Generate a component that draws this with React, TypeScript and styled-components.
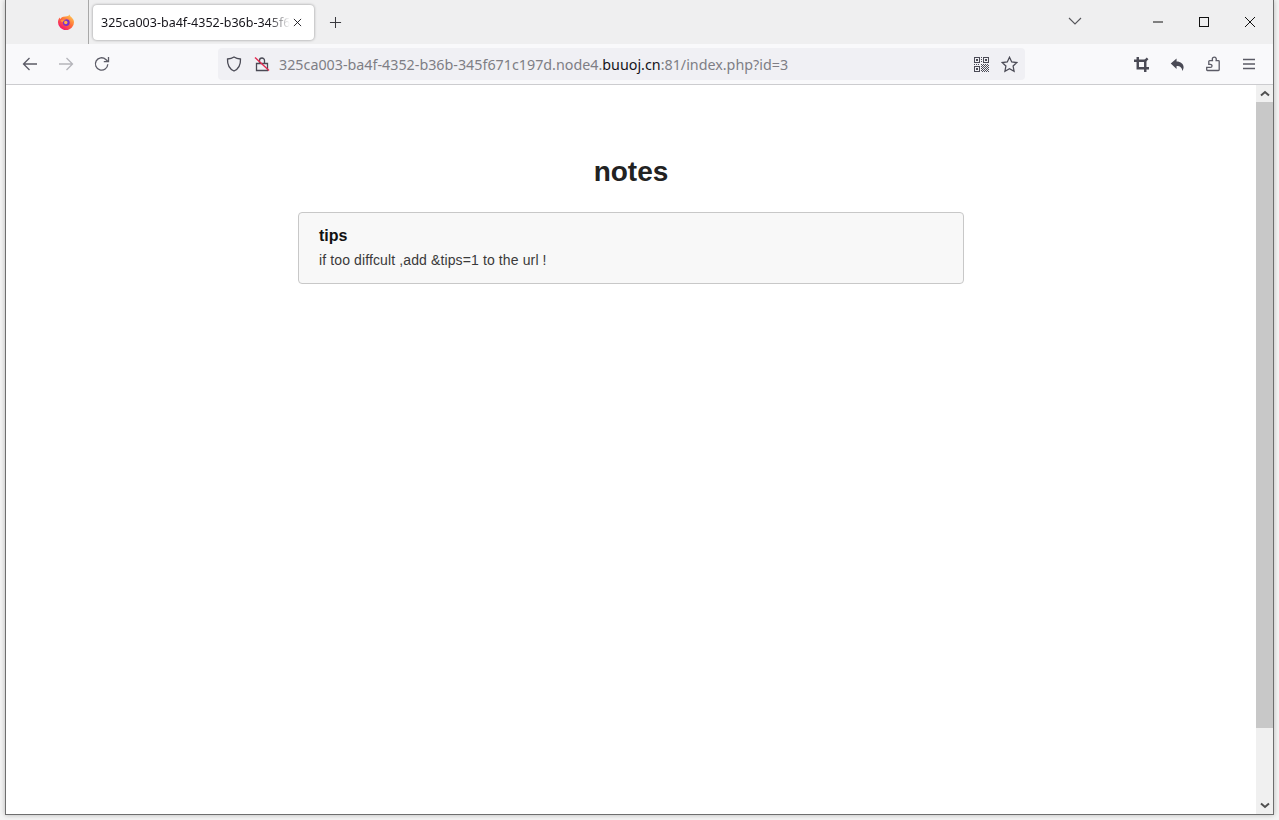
import React from "react";
import styled, { createGlobalStyle } from "styled-components";

const GlobalStyle = createGlobalStyle`
  html, body {
    margin: 0;
    padding: 0;
    height: 100%;
    overflow: hidden;
    background: #f4f4f4;
  }
`;

const UI_FONT = `"Noto Sans", "Open Sans", sans-serif`;

export default function App() {
  return (
    <>
      <GlobalStyle />
      <Desktop>
        <BrowserWindow>
          <TabStrip>
            <AppSlot>
              <FirefoxLogo />
            </AppSlot>
            <Tab>
              <TabTitle>325ca003-ba4f-4352-b36b-345f671c197d.node4.buuoj.cn:81/index.php?id=3</TabTitle>
              <TabClose viewBox="0 0 10 10">
                <path d="M1 1l8 8M9 1L1 9" />
              </TabClose>
            </Tab>
            <NewTab viewBox="0 0 14 14">
              <path d="M7 1v12M1 7h12" />
            </NewTab>
            <TabStripRight>
              <TabList viewBox="0 0 14 8">
                <path d="M1 1l6 6 6-6" />
              </TabList>
              <CaptionButtons>
                <CaptionButton>
                  <svg viewBox="0 0 10 10" width="10" height="10">
                    <path d="M0 5h10" />
                  </svg>
                </CaptionButton>
                <CaptionButton>
                  <svg viewBox="0 0 10 10" width="10" height="10">
                    <rect x="0.5" y="0.5" width="9" height="9" />
                  </svg>
                </CaptionButton>
                <CaptionButton>
                  <svg viewBox="0 0 10 10" width="10" height="10">
                    <path d="M0 0l10 10M10 0L0 10" />
                  </svg>
                </CaptionButton>
              </CaptionButtons>
            </TabStripRight>
          </TabStrip>

          <NavBar>
            <NavGroup>
              <NavButton>
                <NavIcon viewBox="0 0 16 16">
                  <path d="M15 8H1.5M7.5 2L1.5 8l6 6" />
                </NavIcon>
              </NavButton>
              <NavButton>
                <NavIcon $muted viewBox="0 0 16 16">
                  <path d="M1 8h13.5M8.500 2l6 6-6 6" />
                </NavIcon>
              </NavButton>
              <NavButton>
                <NavIcon viewBox="0 0 16 16">
                  <path d="M13.800 8.300a6.200 6.200 0 1 1-2-4.900L14 5.500" />
                  <path d="M14.500 1v4.700H9.800" />
                </NavIcon>
              </NavButton>
            </NavGroup>

            <UrlBar>
              <ShieldIcon viewBox="0 0 16 16">
                <path d="M8 1c2 1.300 4 1.800 6.500 2 .2 5.500-1.500 9.800-6.500 12C3 12.800 1.300 8.500 1.500 3 4 2.800 6 2.300 8 1z" />
              </ShieldIcon>
              <LockIcon viewBox="0 0 16 16">
                <path className="body" d="M5.500 7V4.500a2.500 2.500 0 0 1 5 0V7M2.500 7.500h11v7h-11z" />
                <path className="slash" d="M1 1.500l14 13" />
              </LockIcon>
              <UrlText>
                325ca003-ba4f-4352-b36b-345f671c197d.node4.<UrlHost>buuoj.cn</UrlHost>:81/index.php?id=3
              </UrlText>
              <QrCode />
              <StarIcon viewBox="0 0 16 16">
                <path d="M8 1.200l2.100 4.400 4.800.6-3.500 3.300.9 4.800L8 12l-4.300 2.300.9-4.800L1.100 6.200l4.800-.6z" />
              </StarIcon>
            </UrlBar>

            <NavGroup>
              <NavButton>
                <CropIcon viewBox="0 0 16 16">
                  <path d="M4 0v12h12M0 4h12v12" />
                  <path d="M12 4l2.500-2.500" />
                </CropIcon>
              </NavButton>
              <NavButton>
                <SolidIcon viewBox="0 0 16 16">
                  <path d="M7 1.500v3.300c4.500 0 7.500 2.600 7.500 6.200 0 1.600-.7 3-1.500 4 .2-3.300-1.800-5.500-6-5.500v3.300L.8 7z" />
                </SolidIcon>
              </NavButton>
              <NavButton>
                <NavIcon viewBox="0 0 16 16">
                  <path d="M9.500 1.200c-1.300 0-2.200 1-2.200 2.100 0 .5.200.9.200 1.400H4.600c-.5 0-.8.300-.8.800v2.900h1.500c1 0 1.700.7 1.700 1.500s-.7 1.500-1.700 1.500H1.700v2.400c0 .4.300.7.700.7h11c.5 0 .8-.3.800-.7V5.500c0-.5-.3-.8-.8-.8h-2.300c0-.5.200-.9.200-1.400 0-1.100-.6-2.100-1.800-2.100z" />
                </NavIcon>
              </NavButton>
              <NavButton>
                <NavIcon viewBox="0 0 16 16">
                  <path d="M2 3.500h12M2 8h12M2 12.500h12" />
                </NavIcon>
              </NavButton>
            </NavGroup>
          </NavBar>

          <Viewport>
            <Page>
              <Title>notes</Title>
              <Panel>
                <PanelTitle>tips</PanelTitle>
                <PanelText>if too diffcult ,add &amp;tips=1 to the url !</PanelText>
              </Panel>
            </Page>
            <Scrollbar>
              <ScrollArrow viewBox="0 0 10 6">
                <path d="M1 5l4-3.500L9 5" />
              </ScrollArrow>
              <ScrollTrack>
                <ScrollThumb />
              </ScrollTrack>
              <ScrollArrow viewBox="0 0 10 6">
                <path d="M1 1l4 3.500L9 1" />
              </ScrollArrow>
            </Scrollbar>
          </Viewport>
        </BrowserWindow>
      </Desktop>
    </>
  );
}

function FirefoxLogo() {
  return (
    <svg viewBox="0 0 16 16" width="16" height="16">
      <defs>
        <linearGradient id="fxBody" x1="0.8" y1="0.1" x2="0.2" y2="0.9">
          <stop offset="0" stopColor="#ffbd4f" />
          <stop offset="0.45" stopColor="#ff7139" />
          <stop offset="1" stopColor="#f5156c" />
        </linearGradient>
      </defs>
      <path
        d="M11.500 0.400c.3 1.300 1 1.900 2 2.800C15 4.700 16 6.200 16 8.200a8 8 0 0 1-16 0c0-1.900.6-3.500 1.700-4.800.1.700.3 1.200.7 1.500.5-1.200 1.700-2 3-2.200C7.900 2.400 10.500 2.500 11.500.4z"
        fill="url(#fxBody)"
      />
      <circle cx="8.300" cy="8.600" r="3.400" fill="#7b2fd0" />
      <circle cx="7.800" cy="8.500" r="1.700" fill="#ffb43f" />
      <path d="M2.500 6.500c1.500-1 4-1.400 5.500-.6C6.300 6 5 7 4.900 8.300 3.800 8.200 3 7.500 2.500 6.500z" fill="#ff9640" />
    </svg>
  );
}

function QrCode() {
  const finder = (x: number, y: number) => (
    <path key={`${x}-${y}`} d={`M${x} ${y}h6v6h-6zM${x + 1} ${y + 1}v4h4v-4zM${x + 2} ${y + 2}h2v2h-2z`} fillRule="evenodd" />
  );
  const dots = [
    [7, 0], [7, 2], [7, 4], [0, 7], [2, 7], [4, 7], [7, 7], [9, 7], [11, 7], [13, 7],
    [8, 8], [10, 8], [12, 8], [14, 8], [7, 9], [9, 9], [11, 9], [13, 9], [8, 10], [10, 10],
    [12, 10], [14, 10], [7, 11], [9, 11], [11, 11], [13, 11], [8, 12], [10, 12], [12, 12],
    [14, 12], [7, 13], [9, 13], [11, 13], [13, 13], [8, 14], [10, 14], [12, 14], [14, 14],
  ];
  return (
    <QrSvg viewBox="0 0 15 15" shapeRendering="crispEdges">
      {finder(0, 0)}
      {finder(9, 0)}
      {finder(0, 9)}
      {dots.map(([x, y]) => (
        <rect key={`${x}-${y}`} x={x} y={y} width="1" height="1" />
      ))}
    </QrSvg>
  );
}

const Desktop = styled.div`
  width: 1279px;
  height: 820px;
  padding: 0 5px 5px 5px;
  box-sizing: border-box;
  background: #f4f4f4;
`;

const BrowserWindow = styled.div`
  display: flex;
  flex-direction: column;
  height: 100%;
  box-sizing: border-box;
  border: 1px solid #6e6e6e;
  border-top: none;
  background: #fff;
  box-shadow: 0 0 5px rgba(0, 0, 0, 0.25);
`;

const TabStrip = styled.div`
  display: flex;
  align-items: stretch;
  flex: none;
  height: 44px;
  background: #efeff0;
`;

const AppSlot = styled.div`
  display: flex;
  align-items: center;
  justify-content: flex-end;
  width: 83px;
  box-sizing: border-box;
  padding-right: 14px;
  border-right: 1px solid #a8a8a8;
  margin-right: 4px;
`;

const Tab = styled.div`
  display: flex;
  align-items: center;
  align-self: center;
  width: 221px;
  height: 35px;
  margin-top: 1px;
  box-sizing: border-box;
  padding: 0 12px 0 8px;
  background: #fff;
  border-radius: 4px;
  box-shadow: 0 0 3px rgba(0, 0, 0, 0.4);
`;

const TabTitle = styled.div`
  flex: 1;
  min-width: 0;
  overflow: hidden;
  white-space: nowrap;
  font-family: ${UI_FONT};
  font-size: 12.5px;
  color: #15141a;
  -webkit-mask-image: linear-gradient(to left, transparent 0, #000 22px);
  mask-image: linear-gradient(to left, transparent 0, #000 22px);
`;

const TabClose = styled.svg`
  flex: none;
  width: 9px;
  height: 9px;
  margin-left: 3px;
  fill: none;
  stroke: #15141a;
  stroke-width: 1;
`;

const NewTab = styled.svg`
  flex: none;
  align-self: center;
  width: 13px;
  height: 13px;
  margin-left: 15px;
  fill: none;
  stroke: #3a3a3f;
  stroke-width: 1.1;
`;

const TabStripRight = styled.div`
  display: flex;
  align-items: center;
  flex: 1;
  justify-content: flex-end;
`;

const TabList = styled.svg`
  width: 14px;
  height: 8px;
  margin-right: 53px;
  margin-bottom: 2px;
  fill: none;
  stroke: #55555a;
  stroke-width: 1.1;
`;

const CaptionButtons = styled.div`
  display: flex;
  height: 100%;
`;

const CaptionButton = styled.div`
  display: flex;
  align-items: center;
  justify-content: center;
  width: 46px;
  height: 100%;
  padding-bottom: 1px;
  box-sizing: border-box;

  svg {
    fill: none;
    stroke: #111;
    stroke-width: 1;
    overflow: visible;
  }
`;

const NavBar = styled.div`
  display: flex;
  align-items: center;
  flex: none;
  height: 41px;
  box-sizing: border-box;
  padding: 0 6px;
  background: #f9f9fb;
  border-bottom: 1px solid #cccccf;
`;

const NavGroup = styled.div`
  display: flex;
  align-items: center;
`;

const NavButton = styled.div`
  display: flex;
  align-items: center;
  justify-content: center;
  width: 36px;
  height: 32px;
`;

const NavIcon = styled.svg<{ $muted?: boolean }>`
  width: 16px;
  height: 16px;
  fill: none;
  stroke: ${(props) => (props.$muted ? "#b5b5ba" : "#5b5b66")};
  stroke-width: 1.3;
`;

const SolidIcon = styled.svg`
  width: 15px;
  height: 15px;
  fill: #4a4a55;
  fill-rule: evenodd;
`;

const CropIcon = styled.svg`
  width: 15px;
  height: 15px;
  fill: none;
  stroke: #4a4a55;
  stroke-width: 2.6;
`;

const UrlBar = styled.div`
  display: flex;
  align-items: center;
  flex: none;
  width: 807px;
  height: 32px;
  margin: 0 98px;
  box-sizing: border-box;
  padding: 0 7px 0 8px;
  background: #f0f0f4;
  border-radius: 4px;
`;

const ShieldIcon = styled.svg`
  flex: none;
  width: 16px;
  height: 16px;
  fill: none;
  stroke: #4a4a55;
  stroke-width: 1.3;
`;

const LockIcon = styled.svg`
  flex: none;
  width: 16px;
  height: 16px;
  margin-left: 12px;
  fill: none;

  .body {
    stroke: #4a4a55;
    stroke-width: 1.3;
  }

  .slash {
    stroke: #e22850;
    stroke-width: 1.4;
  }
`;

const UrlText = styled.div`
  flex: 1;
  margin-left: 9px;
  white-space: nowrap;
  font-family: ${UI_FONT};
  font-size: 14.3px;
  color: #7e7e85;
`;

const UrlHost = styled.span`
  color: #15141a;
`;

const QrSvg = styled.svg`
  flex: none;
  width: 15px;
  height: 15px;
  fill: #4a4a55;
`;

const StarIcon = styled.svg`
  flex: none;
  width: 17px;
  height: 17px;
  margin-left: 12px;
  fill: none;
  stroke: #4a4a55;
  stroke-width: 1.2;
`;

const Viewport = styled.div`
  display: flex;
  flex: 1;
  min-height: 0;
  background: #fff;
`;

const Page = styled.main`
  flex: 1;
  min-width: 0;
  display: flex;
  flex-direction: column;
  align-items: center;
  font-family: "Liberation Sans", Arial, sans-serif;
`;

const Title = styled.h1`
  margin: 70px 0 23px;
  font-size: 28px;
  line-height: 34px;
  font-weight: 700;
  color: #222;
`;

const Panel = styled.section`
  width: 666px;
  height: 72px;
  box-sizing: border-box;
  padding: 14px 20px 0;
  background: #f8f8f8;
  border: 1px solid #c8c8c8;
  border-radius: 4px;
`;

const PanelTitle = styled.h4`
  margin: 0;
  font-size: 16px;
  line-height: 18px;
  font-weight: 700;
  color: #111;
`;

const PanelText = styled.p`
  margin: 5px 0 0;
  font-size: 14px;
  line-height: 20px;
  letter-spacing: 0.12px;
  color: #3a3a3a;
`;

const Scrollbar = styled.div`
  display: flex;
  flex-direction: column;
  align-items: center;
  flex: none;
  width: 17px;
  background: #f0f0f0;
`;

const ScrollArrow = styled.svg`
  flex: none;
  width: 10px;
  height: 17px;
  fill: none;
  stroke: #505050;
  stroke-width: 2;
`;

const ScrollTrack = styled.div`
  flex: 1;
  width: 100%;
`;

const ScrollThumb = styled.div`
  width: 100%;
  height: 626px;
  background: #c8c8c8;
`;
